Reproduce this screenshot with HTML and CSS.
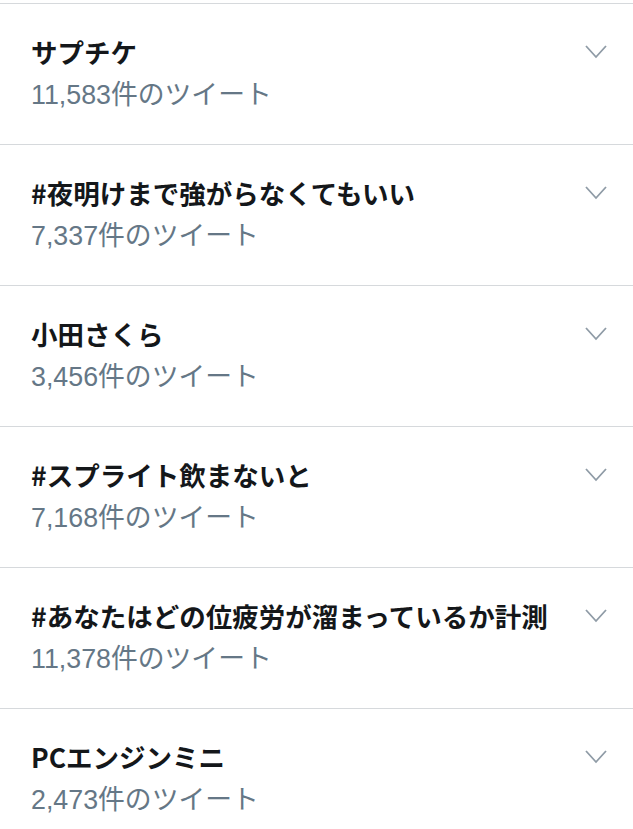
FILE: index.html
```html
<!DOCTYPE html>
<html lang="ja">
<head>
<meta charset="utf-8">
<link rel="stylesheet" href="styles.css">
</head>
<body>
<ul class="trends">
  <li class="trend">
    <div class="text"><div class="title">サプチケ</div><div class="count">11,583件のツイート</div></div>
    <svg class="chev" viewBox="0 0 22 14"><path d="M1 1 L11 12 L21 1"/></svg>
  </li>
  <li class="trend">
    <div class="text"><div class="title">#夜明けまで強がらなくてもいい</div><div class="count">7,337件のツイート</div></div>
    <svg class="chev" viewBox="0 0 22 14"><path d="M1 1 L11 12 L21 1"/></svg>
  </li>
  <li class="trend">
    <div class="text"><div class="title">小田さくら</div><div class="count">3,456件のツイート</div></div>
    <svg class="chev" viewBox="0 0 22 14"><path d="M1 1 L11 12 L21 1"/></svg>
  </li>
  <li class="trend">
    <div class="text"><div class="title">#スプライト飲まないと</div><div class="count">7,168件のツイート</div></div>
    <svg class="chev" viewBox="0 0 22 14"><path d="M1 1 L11 12 L21 1"/></svg>
  </li>
  <li class="trend">
    <div class="text"><div class="title">#あなたはどの位疲労が溜まっているか計測</div><div class="count">11,378件のツイート</div></div>
    <svg class="chev" viewBox="0 0 22 14"><path d="M1 1 L11 12 L21 1"/></svg>
  </li>
  <li class="trend">
    <div class="text"><div class="title">PCエンジンミニ</div><div class="count">2,473件のツイート</div></div>
    <svg class="chev" viewBox="0 0 22 14"><path d="M1 1 L11 12 L21 1"/></svg>
  </li>
</ul>
</body>
</html>
```
FILE: styles.css
```css
html, body {
  margin: 0;
  padding: 0;
  background: #ffffff;
}
body {
  font-family: "Noto Sans CJK JP", "Noto Sans", sans-serif;
  padding-top: 3px;
}
.trends {
  list-style: none;
  margin: 0;
  padding: 0;
}
.trend {
  display: flex;
  align-items: flex-start;
  justify-content: space-between;
  height: 140px;
  border-top: 1px solid #d6d9dc;
  padding: 0 26px 0 31px;
  box-sizing: content-box;
}
.text {
  display: flex;
  flex-direction: column;
  padding-top: 28px;
}
.title {
  font-size: 26.5px;
  font-weight: 700;
  line-height: 40px;
  color: #14171a;
}
.count {
  font-family: "Liberation Sans", "Noto Sans CJK JP", sans-serif;
  font-size: 26.8px;
  line-height: 40px;
  color: #657786;
  margin-top: 3px;
}
.chev {
  width: 22px;
  height: 14px;
  margin-top: 41px;
  flex: none;
}
.chev path {
  fill: none;
  stroke: #8f9ba6;
  stroke-width: 1.8;
}
```
